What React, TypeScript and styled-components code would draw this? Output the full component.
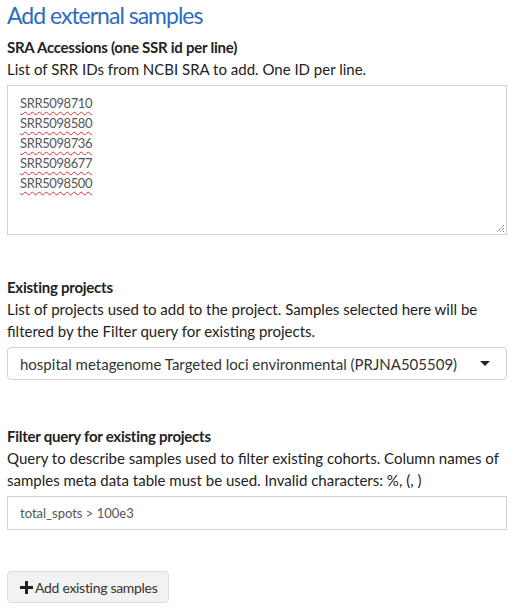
import React from "react";
import styled, { createGlobalStyle } from "styled-components";

const GlobalStyle = createGlobalStyle`
  body {
    margin: 0;
    background: #ffffff;
    font-family: Lato, "Open Sans", sans-serif;
    color: #222;
  }
`;

const accessions = ["SRR5098710", "SRR5098580", "SRR5098736", "SRR5098677", "SRR5098500"];

const Page = styled.div`
  padding: 0 7px;
  width: 500px;
`;

const Title = styled.h3`
  margin: 0 0 5px;
  font-size: 23px;
  font-weight: 400;
  line-height: 31px;
  letter-spacing: -1px;
  color: #2d6cc0;
`;

const Field = styled.section<{ $gap: number }>`
  margin-bottom: ${({ $gap }) => $gap}px;
`;

const Label = styled.div`
  font-size: 15px;
  font-weight: 700;
  line-height: 22px;
  letter-spacing: -0.25px;
`;

const Help = styled.div`
  font-size: 15px;
  line-height: 22px;
  color: #222;
  margin-bottom: 5px;
`;

const TextBox = styled.div`
  position: relative;
  box-sizing: border-box;
  height: 150px;
  border: 1px solid #d0d0d6;
  padding: 7px 12px;
  font-size: 13px;
  line-height: 20px;
  letter-spacing: -0.4px;
  color: #555;
`;

const Accession = styled.div`
  span {
    text-decoration: underline wavy #e03030;
    text-decoration-thickness: 1px;
    text-underline-offset: 3px;
  }
`;

const Grip = styled.svg`
  position: absolute;
  right: 1px;
  bottom: 1px;
`;

const Select = styled.div`
  box-sizing: border-box;
  height: 33px;
  border: 1px solid #d0d0d6;
  border-radius: 4px;
  display: flex;
  align-items: center;
  justify-content: space-between;
  padding: 0 16px 0 12px;
  font-size: 15px;
  color: #333;
`;

const Caret = styled.span`
  width: 0;
  height: 0;
  border-left: 5px solid transparent;
  border-right: 5px solid transparent;
  border-top: 5px solid #222;
`;

const Input = styled.div`
  box-sizing: border-box;
  height: 34px;
  border: 1px solid #d0d0d6;
  display: flex;
  align-items: center;
  padding: 0 12px;
  font-size: 13px;
  color: #555;
`;

const Button = styled.button`
  display: inline-flex;
  align-items: center;
  gap: 2px;
  box-sizing: border-box;
  height: 32px;
  padding: 0 11px 0 12px;
  background: #f2f2f2;
  border: 1px solid #dcdcdc;
  border-radius: 4px;
  font-family: inherit;
  font-size: 14px;
  letter-spacing: -0.3px;
  color: #333;
`;

export default function App() {
  return (
    <Page>
      <GlobalStyle />
      <Title>Add external samples</Title>
      <Field $gap={41}>
        <Label>SRA Accessions (one SSR id per line)</Label>
        <Help>List of SRR IDs from NCBI SRA to add. One ID per line.</Help>
        <TextBox>
          {accessions.map((id) => (
            <Accession key={id}><span>{id}</span></Accession>
          ))}
          <Grip width="10" height="10" viewBox="0 0 10 10">
            <path d="M9 2 L2 9 M9 5 L5 9 M9 8 L8 9" stroke="#555" strokeWidth="1" strokeDasharray="1 1" />
          </Grip>
        </TextBox>
      </Field>
      <Field $gap={45}>
        <Label>Existing projects</Label>
        <Help>
          List of projects used to add to the project. Samples selected here will be filtered by the
          Filter query for existing projects.
        </Help>
        <Select>
          <span>hospital metagenome Targeted loci environmental (PRJNA505509)</span>
          <Caret />
        </Select>
      </Field>
      <Field $gap={41}>
        <Label>Filter query for existing projects</Label>
        <Help>
          Query to describe samples used to filter existing cohorts. Column names of samples meta
          data table must be used. Invalid characters: %, (, )
        </Help>
        <Input>total_spots &gt; 100e3</Input>
      </Field>
      <Button>
        <svg width="13" height="13" viewBox="0 0 13 13">
          <path d="M6.5 0 V13 M0 6.5 H13" stroke="#222" strokeWidth="3" />
        </svg>
        Add existing samples
      </Button>
    </Page>
  );
}
